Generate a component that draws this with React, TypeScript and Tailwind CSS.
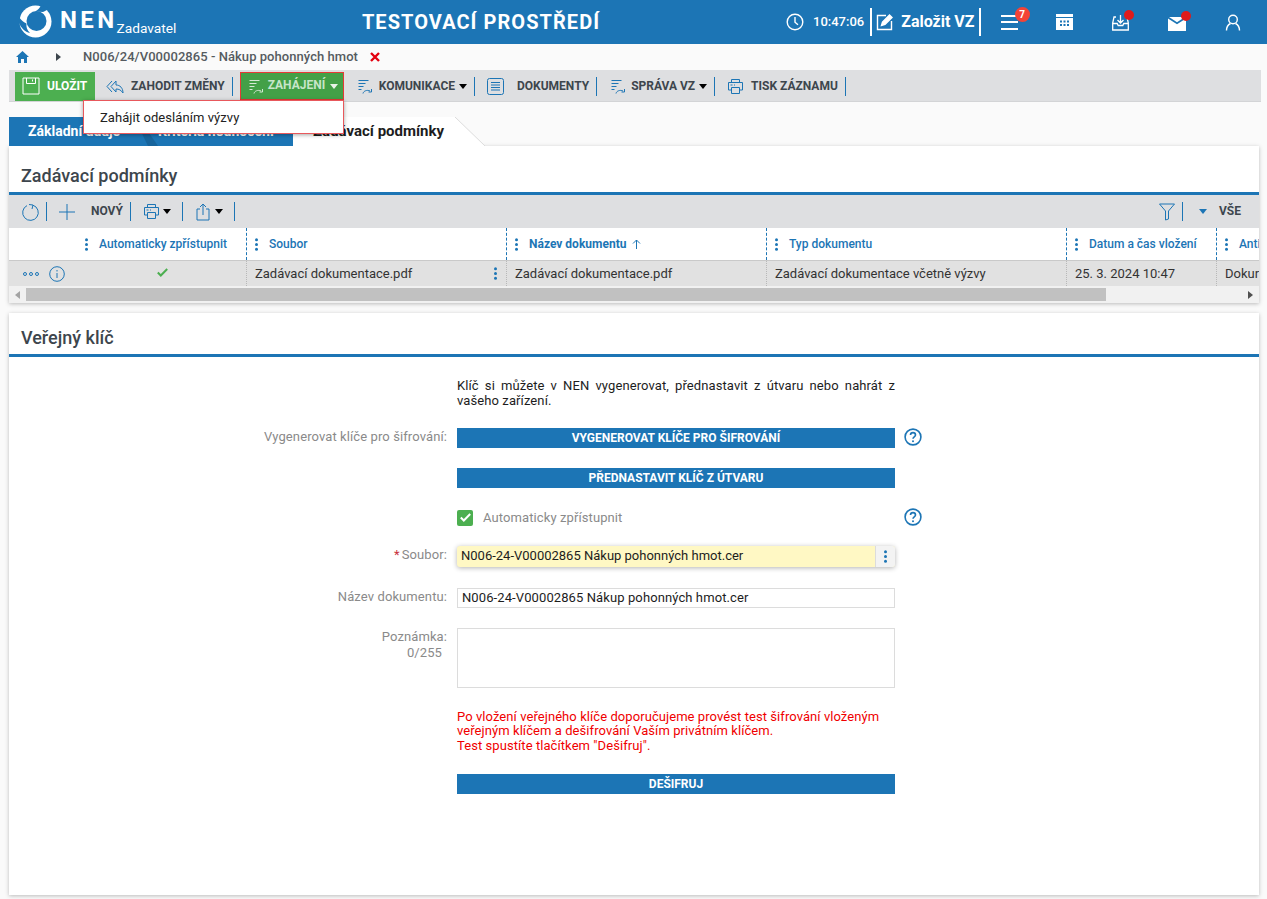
import React from 'react';

const BLUE = '#1c75b5';

const Sep = ({ className = 'h-[19px]' }: { className?: string }) => <span className={`block w-px bg-[#1c75b5] shrink-0 ${className}`} />;

const Caret = ({ className = 'text-[#3d464d]' }: { className?: string }) => (
  <svg width="8" height="5" viewBox="0 0 8 5" className={`shrink-0 ${className}`}>
    <path d="M0 0h8L4 5z" fill="currentColor" />
  </svg>
);

const Dots = ({ className = '' }: { className?: string }) => (
  <svg width="3" height="13" viewBox="0 0 3 13" className={`shrink-0 ${className}`}>
    <circle cx="1.5" cy="1.7" r="1.5" fill={BLUE} />
    <circle cx="1.5" cy="6.5" r="1.5" fill={BLUE} />
    <circle cx="1.5" cy="11.3" r="1.5" fill={BLUE} />
  </svg>
);

const FlowIcon = ({ color = BLUE }: { color?: string }) => (
  <svg width="14" height="15" viewBox="0 0 14 15" fill="none" stroke={color} strokeWidth="1" className="shrink-0">
    <path d="M.5 1.500h10M.5 4.500h7M.5 7.500h5M.5 10.500h3" />
    <path d="M5 14.500c.5-2.500 4-4 7-2.500M13.500 10v3h-3" />
  </svg>
);

const PrintIcon = () => (
  <svg width="17" height="17" viewBox="0 0 17 17" fill="none" stroke={BLUE} strokeWidth="1" className="shrink-0">
    <path d="M4.500 4V1.500h8V4M4 12H1.500V4.500h14V12H13" />
    <path d="M4.500 9.500h8v6h-8z" />
    <path d="M3.500 7h2M7 7h1" />
  </svg>
);

const ToolText = ({ children }: { children: React.ReactNode }) => (
  <span className="block text-[12px] font-bold text-[#3d464d] leading-none whitespace-nowrap -mt-[2px]">{children}</span>
);

const HelpIcon = () => (
  <svg width="18" height="18" viewBox="0 0 18 18" fill="none" className="block shrink-0">
    <circle cx="9" cy="9" r="7.900" stroke={BLUE} strokeWidth="1.600" />
    <path d="M6.500 7c0-3.200 5-3.200 5 0 0 2-2.500 1.800-2.500 3.800" stroke={BLUE} strokeWidth="1.600" />
    <circle cx="9" cy="13.200" r="1" fill={BLUE} />
  </svg>
);

const Bar = ({ children }: { children: React.ReactNode }) => (
  <div className="w-[438px] h-5 bg-[#1c75b5] flex items-center justify-center text-[12px] font-bold text-white leading-none">{children}</div>
);

const FormRow = ({ label, required, children, help, className = '' }: { label?: React.ReactNode; required?: boolean; children: React.ReactNode; help?: boolean; className?: string }) => (
  <div className={`flex items-start ${className}`}>
    <div className="w-[448px] pr-[10px] text-right text-[13px] tracking-[0.1px] leading-[18px] text-[#8a8a8a] shrink-0">
      {required && <span className="text-[#c8323c] mr-[2px]">*</span>}
      {label}
    </div>
    {children}
    {help && <span className="ml-[9px]"><HelpIcon /></span>}
  </div>
);

const columns = [
  { title: 'Automaticky zpřístupnit', width: 'w-[237px]', dots: 'ml-[76px]', cell: '' },
  { title: 'Soubor', width: 'w-[260px]', dots: 'ml-[8px]', cell: 'Zadávací dokumentace.pdf' },
  { title: 'Název dokumentu', width: 'w-[260px]', dots: 'ml-[8px]', cell: 'Zadávací dokumentace.pdf' },
  { title: 'Typ dokumentu', width: 'w-[300px]', dots: 'ml-[8px]', cell: 'Zadávací dokumentace včetně výzvy' },
  { title: 'Datum a čas vložení', width: 'w-[150px]', dots: 'ml-[8px]', cell: '25. 3. 2024 10:47' },
  { title: 'Anti', width: 'w-[43px]', dots: 'ml-[8px]', cell: 'Dokur' },
];

export default function App() {
  return (
    <div className="w-[1267px] h-[899px] overflow-hidden bg-[#fafafa] relative" style={{ fontFamily: 'Roboto, "Noto Sans", sans-serif' }}>
      {/* header */}
      <header className="h-[44px] bg-[#1c75b5] flex items-center text-white">
        <div className="w-[319px] flex items-center pl-[19px] shrink-0">
          <svg width="33" height="33" viewBox="0 0 33 33" className="shrink-0 -mt-[1px]">
            <circle cx="16.500" cy="16.500" r="16" fill="#fff" />
            <circle cx="17.500" cy="16" r="10" fill={BLUE} />
            <path d="M22 0C21 3 19 5 16 6.500L24 7C27 6 29 4 30 3z" fill={BLUE} />
            <path d="M0 12C2 15 4 17 7.500 18.500 7 22 8 25 11 28 6 27 2 23 0 18z" fill={BLUE} />
          </svg>
          <span className="ml-[8px] text-[24px] font-bold tracking-[3.400px] leading-none -mt-[5px]">NEN</span>
          <span className="text-[13.700px] leading-none self-end mb-[2px] -ml-[1px]">Zadavatel</span>
        </div>
        <div className="w-[324px] text-center text-[20px] font-bold tracking-[1.050px] leading-none shrink-0">TESTOVACÍ PROSTŘEDÍ</div>
        <div className="flex items-center ml-[143px]">
          <svg width="18" height="18" viewBox="0 0 18 18" fill="none" stroke="#fff" strokeWidth="1.400" className="shrink-0">
            <circle cx="9" cy="9" r="7.800" />
            <path d="M9 4v5.200l3 2.500" />
          </svg>
          <span className="ml-[9px] text-[13px] font-medium">10:47:06</span>
          <span className="ml-[6px] w-[2px] h-[28px] bg-white" />
          <svg width="18" height="18" viewBox="0 0 18 18" fill="none" stroke="#fff" strokeWidth="1.400" className="ml-[4px] shrink-0">
            <path d="M10 2.500H1.500v14h14V8" />
            <path d="M5.500 12.500l1-3.500 7-7 2.500 2.500-7 7z" fill="#fff" />
          </svg>
          <span className="ml-[7px] text-[16px] font-bold whitespace-nowrap">Založit VZ</span>
          <span className="ml-[4px] w-[2px] h-[28px] bg-white" />
          <div className="relative ml-[20px] w-[17px] h-[15px] flex flex-col justify-between">
            <span className="h-[2px] bg-white" />
            <span className="h-[2px] bg-white" />
            <span className="h-[2px] bg-white" />
            <span className="absolute -top-[8px] left-[14px] w-[15px] h-[15px] rounded-full bg-[#f44336] text-[10px] font-bold leading-[15px] text-center">7</span>
          </div>
          <svg width="17" height="16" viewBox="0 0 17 16" className="ml-[38px] shrink-0">
            <path d="M0 0h17v16H0z" fill="#fff" />
            <path d="M0 3.500h17" stroke={BLUE} />
            <path d="M4 6.500h2v2H4zM7.500 6.500h2v2h-2zM11 6.500h2v2h-2zM4 10h2v2H4zM7.500 10h2v2h-2zM11 10h2v2h-2z" fill={BLUE} />
          </svg>
          <div className="relative ml-[39px]">
            <svg width="17" height="17" viewBox="0 0 17 17" fill="none" stroke="#fff" strokeWidth="1.300" className="block">
              <path d="M4 3H2L.7 9v7h15.600V9L15 3h-2" />
              <path d="M.7 9.500h4.500l1 2h4.600l1-2h4.500M8.500 1v7.500M5.500 6l3 3 3-3" />
            </svg>
            <span className="absolute -top-[4px] left-[12px] w-[10px] h-[10px] rounded-full bg-[#e01b1b]" />
          </div>
          <div className="relative ml-[39px]">
            <svg width="18" height="14" viewBox="0 0 18 14" className="block mt-[3px]">
              <path d="M0 1.500l9 5.800 9-5.800V14H0z" fill="#fff" />
              <path d="M1 0h16L9 5.200z" fill="#fff" />
            </svg>
            <span className="absolute -top-[3px] left-[13px] w-[10px] h-[10px] rounded-full bg-[#e01b1b]" />
          </div>
          <svg width="16" height="17" viewBox="0 0 16 17" fill="none" stroke="#fff" strokeWidth="1.400" className="ml-[39px] shrink-0">
            <circle cx="8" cy="5.500" r="4.300" />
            <path d="M1.500 16.500c0-4 2-6 4-7M14.500 16.500c0-4-2-6-4-7" />
          </svg>
        </div>
      </header>

      {/* breadcrumb */}
      <div className="h-[26px] flex items-center">
        <svg width="13" height="12" viewBox="0 0 13 12" className="ml-[16px] shrink-0"><path d="M6.500 0L13 6h-2v6H8V8H5v4H2V6H0z" fill={BLUE} /></svg>
        <svg width="5" height="8" viewBox="0 0 5 8" className="ml-[27px] shrink-0"><path d="M0 0l5 4-5 4z" fill="#3d464d" /></svg>
        <span className="ml-[22px] text-[13px] tracking-[0.05px] font-medium text-[#555b60] whitespace-nowrap">N006/24/V00002865 - Nákup pohonných hmot</span>
        <svg width="10" height="10" viewBox="0 0 10 10" className="ml-[12px] shrink-0"><path d="M1 1l8 8M9 1l-8 8" stroke="#e3000f" strokeWidth="2.400" /></svg>
      </div>

      {/* toolbar */}
      <div className="ml-[9px] w-[1252px] h-[32px] bg-[#dedfe1] border-b border-[#d3d4d6] flex items-start pl-[6px] pt-[2px]">
        <div className="w-[80px] h-[29px] bg-[#4caf50] flex items-center pl-[7px] shrink-0">
          <svg width="18" height="18" viewBox="0 0 18 18" fill="none" stroke="#fff" strokeWidth="1" className="shrink-0 -mt-[1px]">
            <path d="M1 1h16v16H1zM4.500 1v5.500h9V1M10.500 2.500v2" />
          </svg>
          <span className="ml-[7px] text-[12px] font-bold text-white leading-none -mt-[2px]">ULOŽIT</span>
        </div>
        <div className="h-[29px] flex items-center ml-[11px]">
          <svg width="18" height="14" viewBox="0 0 18 14" fill="none" stroke={BLUE} strokeWidth="1" className="shrink-0">
            <path d="M6 1L1 6.500 6 12M10 1L5 6.500 10 12V9c3 0 5 1 7 4 0-5-3-8-7-8z" />
          </svg>
          <span className="ml-[7px]"><ToolText>ZAHODIT ZMĚNY</ToolText></span>
          <span className="ml-[7px]"><Sep /></span>
        </div>
        <div className="ml-[7px] w-[104px] h-[28px] bg-[#43a047] border-[1px] border-[#e53935] flex items-center pl-[8px] shrink-0">
          <FlowIcon color="#d5e8d6" />
          <span className="ml-[5px] text-[12px] font-bold text-[#c7e5c9] leading-none -mt-[2px]">ZAHÁJENÍ</span>
          <Caret className="ml-[5px] text-[#e8f3e8]" />
        </div>
        <div className="h-[29px] flex items-center ml-[14px]">
          <FlowIcon />
          <span className="ml-[7px]"><ToolText>KOMUNIKACE</ToolText></span>
          <Caret className="ml-[4px]" />
          <span className="ml-[7px]"><Sep /></span>
          <svg width="17" height="17" viewBox="0 0 17 17" fill="none" stroke={BLUE} strokeWidth="1" className="ml-[12px] shrink-0">
            <rect x=".5" y=".5" width="16" height="16" rx="2" />
            <path d="M4 4.500h9M4 7h9M4 9.500h9M4 12h9" />
          </svg>
          <span className="ml-[13px]"><ToolText>DOKUMENTY</ToolText></span>
          <span className="ml-[7px]"><Sep /></span>
          <span className="ml-[14px]"><FlowIcon /></span>
          <span className="ml-[6px]"><ToolText>SPRÁVA VZ</ToolText></span>
          <Caret className="ml-[4px]" />
          <span className="ml-[7px]"><Sep /></span>
          <span className="ml-[12px]"><PrintIcon /></span>
          <span className="ml-[7px]"><ToolText>TISK ZÁZNAMU</ToolText></span>
          <span className="ml-[7px]"><Sep /></span>
        </div>
      </div>

      {/* tabs */}
      <div className="ml-[9px] mt-[15px] h-[29px] flex items-end">
        <div className="relative w-[284px] h-[29px] bg-[#1c75b5] text-white text-[14px] font-bold leading-[29px] shrink-0">
          <span className="absolute left-[19px] top-0">Základní údaje</span>
          <svg width="24" height="29" viewBox="0 0 24 29" className="absolute left-[125px] top-0"><path d="M0 0h4l20 29H14z" fill="#17649c" /></svg>
          <span className="absolute left-[149px] top-0">Kritéria hodnocení</span>
        </div>
        <div className="relative w-[162px] h-[29px] bg-white text-[15px] font-bold text-[#1d1d1d] leading-[29px] pl-[20px] shrink-0 whitespace-nowrap">
          Zadávací podmínky
          <svg width="30" height="29" viewBox="0 0 30 29" className="absolute left-[162px] top-0"><path d="M0 0l30 29H0z" fill="#fff" /><path d="M0 0l30 29" stroke="#dcdcdc" /></svg>
        </div>
      </div>

      {/* conditions panel */}
      <section className="ml-[9px] w-[1250px] h-[157px] bg-white shadow-[0_1px_4px_rgba(0,0,0,0.25)] overflow-hidden">
        <h2 className="h-[49px] border-b-[3px] border-[#1c75b5] pl-[12px] pt-[18px] text-[18px] font-medium text-[#3d464d] leading-[24px]">Zadávací podmínky</h2>
        <div className="h-[33px] bg-[#dedfe1] flex items-center pl-[13px]">
          <svg width="18" height="18" viewBox="0 0 18 18" fill="none" stroke={BLUE} strokeWidth="1" className="shrink-0">
            <path d="M11 2.200A7.800 7.800 0 1 1 5 2.600M10 6l1-4-4-.500" />
          </svg>
          <span className="ml-[6px]"><Sep /></span>
          <svg width="16" height="16" viewBox="0 0 16 16" stroke={BLUE} strokeWidth="1" className="ml-[12px] shrink-0"><path d="M8 0v16M0 8h16" /></svg>
          <span className="ml-[16px]"><ToolText>NOVÝ</ToolText></span>
          <span className="ml-[7px]"><Sep /></span>
          <span className="ml-[12px]"><PrintIcon /></span>
          <Caret className="ml-[3px]" />
          <span className="ml-[11px]"><Sep /></span>
          <svg width="14" height="18" viewBox="0 0 14 18" fill="none" stroke={BLUE} strokeWidth="1" className="ml-[13px] shrink-0">
            <path d="M4 6H1v11h12V6h-3M7 12V1M4 4l3-3 3 3" />
          </svg>
          <Caret className="ml-[5px]" />
          <span className="ml-[11px]"><Sep /></span>
          <svg width="16" height="18" viewBox="0 0 16 18" fill="none" stroke={BLUE} strokeWidth="1" className="ml-auto shrink-0">
            <path d="M.5 1h15l-6 7v8l-3 1V8z" />
          </svg>
          <span className="ml-[7px]"><Sep /></span>
          <Caret className="ml-[16px] text-[#1c75b5]" />
          <span className="ml-[12px] mr-[18px]"><ToolText>VŠE</ToolText></span>
        </div>
        <div className="h-[33px] flex border-b border-[#c9c9c9]">
          {columns.map((c, i) => (
            <div key={c.title} className={`${c.width} shrink-0 flex items-center ${i > 0 ? 'border-l border-dashed border-[#1c75b5]' : ''}`}>
              <Dots className={c.dots} />
              <span className={`ml-[11px] text-[12px] whitespace-nowrap text-[#1c75b5] ${c.title === 'Název dokumentu' ? 'font-bold' : 'font-medium'}`}>{c.title}</span>
              {c.title === 'Název dokumentu' && (
                <svg width="9" height="10" viewBox="0 0 9 10" fill="none" stroke={BLUE} className="ml-[6px]"><path d="M4.500 10V1M1 4.500l3.500-3.500L8 4.500" /></svg>
              )}
            </div>
          ))}
        </div>
        <div className="h-[25px] flex bg-[#e1e1e1]">
          {columns.map((c, i) => (
            <div key={c.title} className={`${c.width} shrink-0 flex items-center overflow-hidden ${i > 0 ? 'border-l border-dotted border-[#b8b8b8] pl-[8px]' : ''}`}>
              {i === 0 ? (
                <>
                  <svg width="16" height="4" viewBox="0 0 16 4" fill="none" stroke={BLUE} className="ml-[14px] shrink-0">
                    <circle cx="2" cy="2" r="1.500" /><circle cx="8" cy="2" r="1.500" /><circle cx="14" cy="2" r="1.500" />
                  </svg>
                  <svg width="16" height="16" viewBox="0 0 16 16" fill="none" stroke={BLUE} className="ml-[10px] shrink-0">
                    <circle cx="8" cy="8" r="7.300" /><path d="M8 7v5M8 4v1.500" />
                  </svg>
                  <svg width="11" height="9" viewBox="0 0 11 9" fill="none" stroke="#4caf50" strokeWidth="2" className="ml-[92px] shrink-0 -mt-[3px]">
                    <path d="M.8 4.500l3 3L10.200 1" />
                  </svg>
                </>
              ) : (
                <>
                  <span className="text-[13px] text-[#333] whitespace-nowrap">{c.cell}</span>
                  {i === 1 && <Dots className="ml-auto mr-[9px]" />}
                </>
              )}
            </div>
          ))}
        </div>
        <div className="h-[17px] bg-[#f1f1f1] flex items-center">
          <svg width="5" height="8" viewBox="0 0 5 8" className="ml-[6px] shrink-0"><path d="M5 0L0 4l5 4z" fill="#a3a3a3" /></svg>
          <span className="ml-[6px] w-[1080px] h-[13px] bg-[#c1c1c1]" />
          <svg width="5" height="8" viewBox="0 0 5 8" className="ml-auto mr-[6px] shrink-0"><path d="M0 0l5 4-5 4z" fill="#505050" /></svg>
        </div>
      </section>

      {/* public key panel */}
      <section className="ml-[9px] mt-[10px] w-[1250px] h-[582px] bg-white shadow-[0_1px_4px_rgba(0,0,0,0.25)]">
        <h2 className="h-[44px] border-b-[3px] border-[#1c75b5] pl-[12px] pt-[13px] text-[18px] font-medium text-[#3d464d] leading-[24px]">Veřejný klíč</h2>
        <div className="pt-[21px]">
          <FormRow>
            <p className="w-[438px] text-[13px] tracking-[0.1px] leading-[15px] text-[#1d1d1d] text-justify">
              Klíč si můžete v NEN vygenerovat, přednastavit z útvaru nebo nahrát z vašeho zařízení.
            </p>
          </FormRow>
          <FormRow className="mt-[20px] items-center" label="Vygenerovat klíče pro šifrování:" help>
            <Bar>VYGENEROVAT KLÍČE PRO ŠIFROVÁNÍ</Bar>
          </FormRow>
          <FormRow className="mt-[20px]">
            <Bar>PŘEDNASTAVIT KLÍČ Z ÚTVARU</Bar>
          </FormRow>
          <FormRow className="mt-[20px] items-center" help>
            <div className="w-[438px] flex items-center">
              <span className="w-4 h-4 rounded-[2px] bg-[#4caf50] flex items-center justify-center">
                <svg width="11" height="9" viewBox="0 0 11 9" fill="none" stroke="#fff" strokeWidth="2"><path d="M.8 4.500l3 3L10.200 1" /></svg>
              </span>
              <span className="ml-[10px] text-[13px] tracking-[0.1px] text-[#8a8a8a]">Automaticky zpřístupnit</span>
            </div>
          </FormRow>
          <FormRow className="mt-[18px] items-center" label="Soubor:" required>
            <div className="w-[438px] h-[21px] rounded-[3px] bg-[#fff8c4] shadow-[0_1px_5px_rgba(0,0,0,0.3)] flex items-center overflow-hidden">
              <span className="ml-[4px] text-[13px] text-[#1d1d1d] whitespace-nowrap">N006-24-V00002865 Nákup pohonných hmot.cer</span>
              <span className="ml-auto w-[20px] h-full bg-[#f3f3f3] border-l border-[#dcdcdc] flex items-center justify-center"><Dots /></span>
            </div>
          </FormRow>
          <FormRow className="mt-[21px] items-center" label="Název dokumentu:">
            <div className="w-[438px] h-5 border border-[#dcdcdc] flex items-center px-[4px] text-[13px] tracking-[0.1px] text-[#1d1d1d] whitespace-nowrap">N006-24-V00002865 Nákup pohonných hmot.cer</div>
          </FormRow>
          <FormRow className="mt-[20px]" label={<span className="block pt-[1px] leading-[16px]">Poznámka:<br /><span className="mr-[5px]">0/255</span></span>}>
            <div className="w-[438px] h-[60px] border border-[#dcdcdc]" />
          </FormRow>
          <FormRow className="mt-[22px]">
            <p className="w-[438px] text-[13px] tracking-[0.07px] leading-[14.500px] text-[#f00000]">
              Po vložení veřejného klíče doporučujeme provést test šifrování vloženým veřejným klíčem a dešifrování Vaším privátním klíčem.<br />
              Test spustíte tlačítkem "Dešifruj".
            </p>
          </FormRow>
          <FormRow className="mt-[21px]">
            <Bar>DEŠIFRUJ</Bar>
          </FormRow>
        </div>
      </section>

      {/* open dropdown */}
      <div className="absolute left-[83px] top-[100px] w-[261px] h-[34px] bg-white border-[1px] border-[#e8585c] shadow-[0_1px_4px_rgba(0,0,0,0.35)] flex items-center pl-[16px] text-[13px] tracking-[0.07px] text-[#222] leading-none">
        Zahájit odesláním výzvy
      </div>
    </div>
  );
}
